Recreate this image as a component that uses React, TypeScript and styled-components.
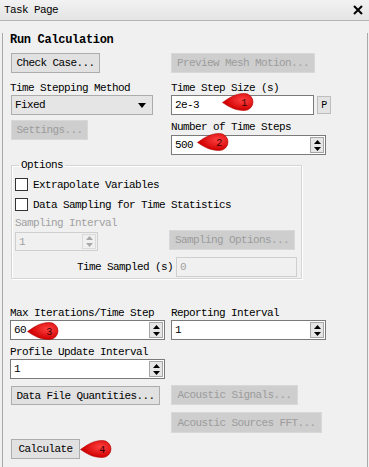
import { createGlobalStyle, styled } from 'styled-components';

const GlobalStyle = createGlobalStyle`
    html, body {
        margin: 0;
        padding: 0;
        background: #f0f0f0;
    }
    body {
        font-family: "Liberation Mono", "DejaVu Sans Mono", monospace;
        font-size: 11px;
        letter-spacing: -0.6px;
        color: #000;
    }
`;

const Window = styled.div`
    width: 369px;
    height: 467px;
    overflow: hidden;
    background: #f0f0f0;
`;

const TitleBar = styled.div`
    display: flex;
    align-items: center;
    justify-content: space-between;
    height: 20px;
    padding: 0 6px 0 4px;
    border-bottom: 1px solid #b4b4b4;
    background: linear-gradient(#f2f2f2, #e4e4e4);
`;

const Panel = styled.div`
    box-sizing: border-box;
    margin-left: 2px;
    width: 366px;
    height: 446px;
    padding-left: 7px;
    border-left: 1px solid #a8a8a8;
    border-right: 1px solid #a8a8a8;
`;

const Heading = styled.div`
    margin-top: 12px;
    line-height: 14px;
    font-size: 12px;
    font-weight: bold;
    letter-spacing: -0.3px;
`;

const Row = styled.div<{ $mt: number }>`
    display: flex;
    align-items: flex-start;
    margin-top: ${(p) => p.$mt}px;
`;

const LeftCell = styled.div`
    flex: none;
    width: 161px;
`;

const RightCell = styled.div`
    flex: none;
`;

const Label = styled.div<{ $lh?: number; $muted?: boolean }>`
    line-height: ${(p) => p.$lh ?? 14}px;
    white-space: nowrap;
    color: ${(p) => (p.$muted ? '#a0a0a0' : '#000')};
`;

const Button = styled.button<{ $w: number; $h?: number; $ml?: number; $mt?: number }>`
    box-sizing: border-box;
    display: block;
    width: ${(p) => p.$w}px;
    height: ${(p) => p.$h ?? 20}px;
    margin: ${(p) => p.$mt ?? 0}px 0 0 ${(p) => p.$ml ?? 0}px;
    padding: 0;
    font: inherit;
    letter-spacing: inherit;
    color: #000;
    background: #e1e1e1;
    border: 1px solid #adadad;
    white-space: nowrap;

    &:disabled {
        color: #9c9c9c;
        background: #cecece;
        border-color: #d8d8d8;
    }
`;

const Anchor = styled.div`
    position: relative;
    width: fit-content;
`;

const Marker = styled.svg<{ $x: number; $y: number }>`
    position: absolute;
    left: ${(p) => p.$x}px;
    top: ${(p) => p.$y}px;
    overflow: visible;
`;

const Box = styled.div<{ $w: number; $h?: number; $disabled?: boolean }>`
    box-sizing: border-box;
    display: flex;
    align-items: stretch;
    width: ${(p) => p.$w}px;
    height: ${(p) => p.$h ?? 20}px;
    border: 1px solid ${(p) => (p.$disabled ? '#cfcfcf' : '#7a7a7a')};
    background: ${(p) => (p.$disabled ? '#f0f0f0' : '#fff')};
    color: ${(p) => (p.$disabled ? '#a0a0a0' : '#000')};
`;

const BoxText = styled.span`
    flex: 1;
    display: flex;
    align-items: center;
    padding-left: 3px;
    white-space: nowrap;
`;

const Spin = styled.div<{ $disabled?: boolean }>`
    box-sizing: border-box;
    display: flex;
    flex-direction: column;
    justify-content: space-around;
    align-items: center;
    width: 14px;
    margin: 1px;
    border: 1px solid ${(p) => (p.$disabled ? '#dadada' : '#a6a6a6')};
    background: ${(p) => (p.$disabled ? '#f0f0f0' : '#e6e6e6')};
    color: ${(p) => (p.$disabled ? '#a8a8a8' : '#000')};
`;

const Select = styled.div`
    box-sizing: border-box;
    display: flex;
    align-items: center;
    justify-content: space-between;
    width: 142px;
    height: 20px;
    margin-left: 1px;
    padding: 0 6px 0 3px;
    border: 1px solid #acacac;
    background: #e5e5e5;
`;

const InputLine = styled.div`
    display: flex;
    align-items: flex-start;
    gap: 3px;
`;

const PButton = styled.div`
    box-sizing: border-box;
    display: flex;
    align-items: center;
    justify-content: center;
    width: 14px;
    height: 18px;
    margin-top: 1px;
    border: 1px solid #bdbdbd;
    background: #e3e3e3;
    font-size: 10px;
`;

const Group = styled.fieldset`
    box-sizing: border-box;
    width: 291px;
    margin: 3px 0 0 1px;
    padding: 0 4px 1px 3px;
    border: 1px solid #d5d5d5;
    box-shadow: inset 1px 1px 0 #fff, 1px 1px 0 #fff;
`;

const Legend = styled.legend`
    margin-left: 4px;
    padding: 0 2px;
    line-height: 14px;
`;

const CheckRow = styled.label<{ $mt: number }>`
    display: flex;
    align-items: center;
    gap: 5px;
    height: 13px;
    margin-top: ${(p) => p.$mt}px;
    white-space: nowrap;
`;

const CheckBox = styled.span`
    box-sizing: border-box;
    flex: none;
    width: 13px;
    height: 13px;
    border: 1px solid #333;
    background: #fff;
`;

const SamplingRow = styled.div`
    display: grid;
    grid-template-columns: 154px auto;
    align-items: start;
`;

const SpinHolder = styled.div`
    margin-top: 2px;
`;

const SampledRow = styled.div`
    display: flex;
    align-items: center;
    justify-content: flex-end;
    gap: 3px;
    margin-top: 6px;
`;

const MutedLabel = styled(Label)`
    margin-top: 5px;
`;

function Arrow({ up }: { up?: boolean }) {
    return (
        <svg width="7" height="4" viewBox="0 0 7 4">
            <path d={up ? 'M3.5 0 L7 4 L0 4 Z' : 'M0 0 L7 0 L3.5 4 Z'} fill="currentColor" />
        </svg>
    );
}

function SpinBox({ value, w, h, disabled }: { value: string; w: number; h?: number; disabled?: boolean }) {
    return (
        <Box $w={w} $h={h} $disabled={disabled}>
            <BoxText>{value}</BoxText>
            <Spin $disabled={disabled}>
                <Arrow up />
                <Arrow />
            </Spin>
        </Box>
    );
}

function Pin({ n, x, y }: { n: number; x: number; y: number }) {
    return (
        <Marker $x={x} $y={y} width="32" height="18" viewBox="0 0 32 18">
            <defs>
                <radialGradient id={`pin${n}`} cx="0.66" cy="0.38" r="0.6">
                    <stop offset="0" stopColor="#ff4040" />
                    <stop offset="1" stopColor="#d00000" />
                </radialGradient>
            </defs>
            <path
                d="M0.5 9.5 C6 6 12 0.5 22.5 0.5 A8.5 8.5 0 0 1 22.5 17.5 C12 17.5 6 13 0.5 9.5 Z"
                fill={`url(#pin${n})`}
                stroke="#b00000"
                strokeWidth="0.6"
            />
            <text
                x="22"
                y="13"
                textAnchor="middle"
                fontSize="10"
                fontFamily="Liberation Mono, monospace"
                fill="#3a0000"
            >
                {n}
            </text>
        </Marker>
    );
}

export default function App() {
    return (
        <Window>
            <GlobalStyle />
            <TitleBar>
                <span>Task Page</span>
                <svg width="10" height="10" viewBox="0 0 10 10">
                    <path d="M1 1 L9 9 M9 1 L1 9" stroke="#000" strokeWidth="2" />
                </svg>
            </TitleBar>
            <Panel>
                <Heading>Run Calculation</Heading>

                <Row $mt={6}>
                    <LeftCell>
                        <Button $w={89} $ml={1}>Check Case...</Button>
                    </LeftCell>
                    <RightCell>
                        <Button $w={144} disabled>Preview Mesh Motion...</Button>
                    </RightCell>
                </Row>

                <Row $mt={8}>
                    <LeftCell>
                        <Label>Time Stepping Method</Label>
                        <Select>
                            <span>Fixed</span>
                            <svg width="8" height="5" viewBox="0 0 8 5">
                                <path d="M0 0 L8 0 L4 5 Z" fill="#000" />
                            </svg>
                        </Select>
                    </LeftCell>
                    <RightCell>
                        <Label>Time Step Size (s)</Label>
                        <InputLine>
                            <Anchor>
                                <Box $w={143}>
                                    <BoxText>2e-3</BoxText>
                                </Box>
                                <Pin n={1} x={51} y={-2} />
                            </Anchor>
                            <PButton>P</PButton>
                        </InputLine>
                    </RightCell>
                </Row>

                <Row $mt={5}>
                    <LeftCell>
                        <Button $w={77} $ml={1} disabled>Settings...</Button>
                    </LeftCell>
                    <RightCell>
                        <Label $lh={15}>Number of Time Steps</Label>
                        <Anchor>
                            <SpinBox value="500" w={155} />
                            <Pin n={2} x={26} y={-2} />
                        </Anchor>
                    </RightCell>
                </Row>

                <Group>
                    <Legend>Options</Legend>
                    <CheckRow $mt={6}>
                        <CheckBox />
                        Extrapolate Variables
                    </CheckRow>
                    <CheckRow $mt={7}>
                        <CheckBox />
                        Data Sampling for Time Statistics
                    </CheckRow>
                    <MutedLabel $muted>Sampling Interval</MutedLabel>
                    <SamplingRow>
                        <SpinHolder>
                            <SpinBox value="1" w={83} h={19} disabled />
                        </SpinHolder>
                        <Button $w={126} disabled>Sampling Options...</Button>
                    </SamplingRow>
                    <SampledRow>
                        <Label>Time Sampled (s)</Label>
                        <Box $w={121} $disabled>
                            <BoxText>0</BoxText>
                        </Box>
                    </SampledRow>
                </Group>

                <Row $mt={27}>
                    <LeftCell>
                        <Label>Max Iterations/Time Step</Label>
                        <Anchor>
                            <SpinBox value="60" w={155} />
                            <Pin n={3} x={17} y={2} />
                        </Anchor>
                    </LeftCell>
                    <RightCell>
                        <Label>Reporting Interval</Label>
                        <SpinBox value="1" w={155} />
                    </RightCell>
                </Row>

                <Row $mt={5}>
                    <LeftCell>
                        <Label>Profile Update Interval</Label>
                        <SpinBox value="1" w={155} />
                    </LeftCell>
                </Row>

                <Row $mt={6}>
                    <LeftCell>
                        <Button $w={149} $h={19} $ml={1} $mt={1}>Data File Quantities...</Button>
                    </LeftCell>
                    <RightCell>
                        <Button $w={127} disabled>Acoustic Signals...</Button>
                    </RightCell>
                </Row>

                <Row $mt={7}>
                    <LeftCell />
                    <RightCell>
                        <Button $w={151} $h={21} disabled>Acoustic Sources FFT...</Button>
                    </RightCell>
                </Row>

                <Row $mt={6}>
                    <LeftCell>
                        <Anchor>
                            <Button $w={69} $ml={1}>Calculate</Button>
                            <Pin n={4} x={70} y={1} />
                        </Anchor>
                    </LeftCell>
                </Row>
            </Panel>
        </Window>
    );
}
